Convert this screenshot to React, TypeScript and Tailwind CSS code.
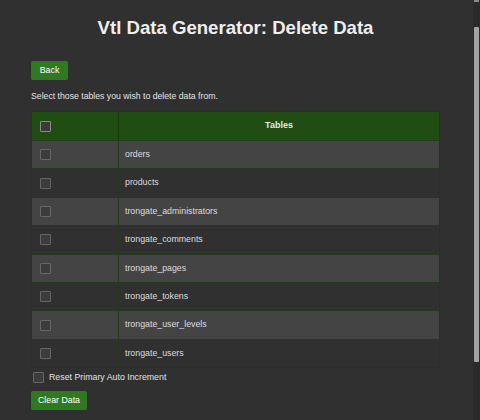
import React from "react";

const tables = [
  "orders",
  "products",
  "trongate_administrators",
  "trongate_comments",
  "trongate_pages",
  "trongate_tokens",
  "trongate_user_levels",
  "trongate_users",
];

const Box = ({ head }: { head?: boolean }) => (
  <input
    type="checkbox"
    className={
      "appearance-none block w-[11px] h-[11px] rounded-[1px] border " +
      (head ? "border-[#8a8a8a] bg-[#3a3a3a]" : "border-[#666666] bg-[#3c3c3c]")
    }
  />
);

export default function App() {
  return (
    <div className="flex h-[420px] overflow-hidden bg-[#303030] text-[#e2e2e2] font-['Liberation_Sans',Arial,sans-serif]">
      <div className="flex-1 pl-[31px] pr-[33px]">
        <h1 className="pt-[16px] leading-[24px] text-center font-bold text-[18.6px] text-[#eeeeee]">
          Vtl Data Generator: Delete Data
        </h1>

        <button className="mt-[21px] h-[19px] w-[37px] rounded-[2px] bg-[#2f7a21] text-[8.8px] text-white">
          Back
        </button>

        <p className="mt-[10px] leading-[12px] text-[8.7px]">
          Select those tables you wish to delete data from.
        </p>

        <div className="mt-[9px] border border-[#1d3a14]">
          <div className="flex h-[28px] bg-[#1f4d12]">
            <div className="w-[87px] flex items-center pl-[8px] border-r border-[#17380d]">
              <Box head />
            </div>
            <div className="flex-1 flex items-center justify-center text-[9px] font-bold text-[#e8e8e8]">
              Tables
            </div>
          </div>
          {tables.map((t, i) => (
            <div
              key={t}
              className={
                "flex h-[28.4px] border-t border-[#243a1c] " +
                (i % 2 === 0 ? "bg-[#454444]" : "bg-[#303030]")
              }
            >
              <div className="w-[87px] flex items-center pl-[8px] border-r border-[#233a1a]">
                <Box />
              </div>
              <div className="flex-1 flex items-center pl-[6px] text-[8.8px] text-[#dcdcdc]">
                {t}
              </div>
            </div>
          ))}
        </div>

        <label className="mt-[3px] ml-[2px] flex items-center gap-[5px] text-[8.8px]">
          <Box />
          <span>Reset Primary Auto Increment</span>
        </label>

        <button className="mt-[7px] h-[19px] w-[56px] rounded-[2px] bg-[#2f7a21] text-[8.8px] text-white">
          Clear Data
        </button>
      </div>

      <div className="w-[7px] bg-[#2a2a2a] flex flex-col">
        <div className="h-[2px] mx-[1px] bg-[#8a8a8a]" />
        <div className="h-[25px]" />
        <div className="h-[335px] mx-[1px] rounded-[1px] bg-[#a3a3a3]" />
      </div>
    </div>
  );
}
